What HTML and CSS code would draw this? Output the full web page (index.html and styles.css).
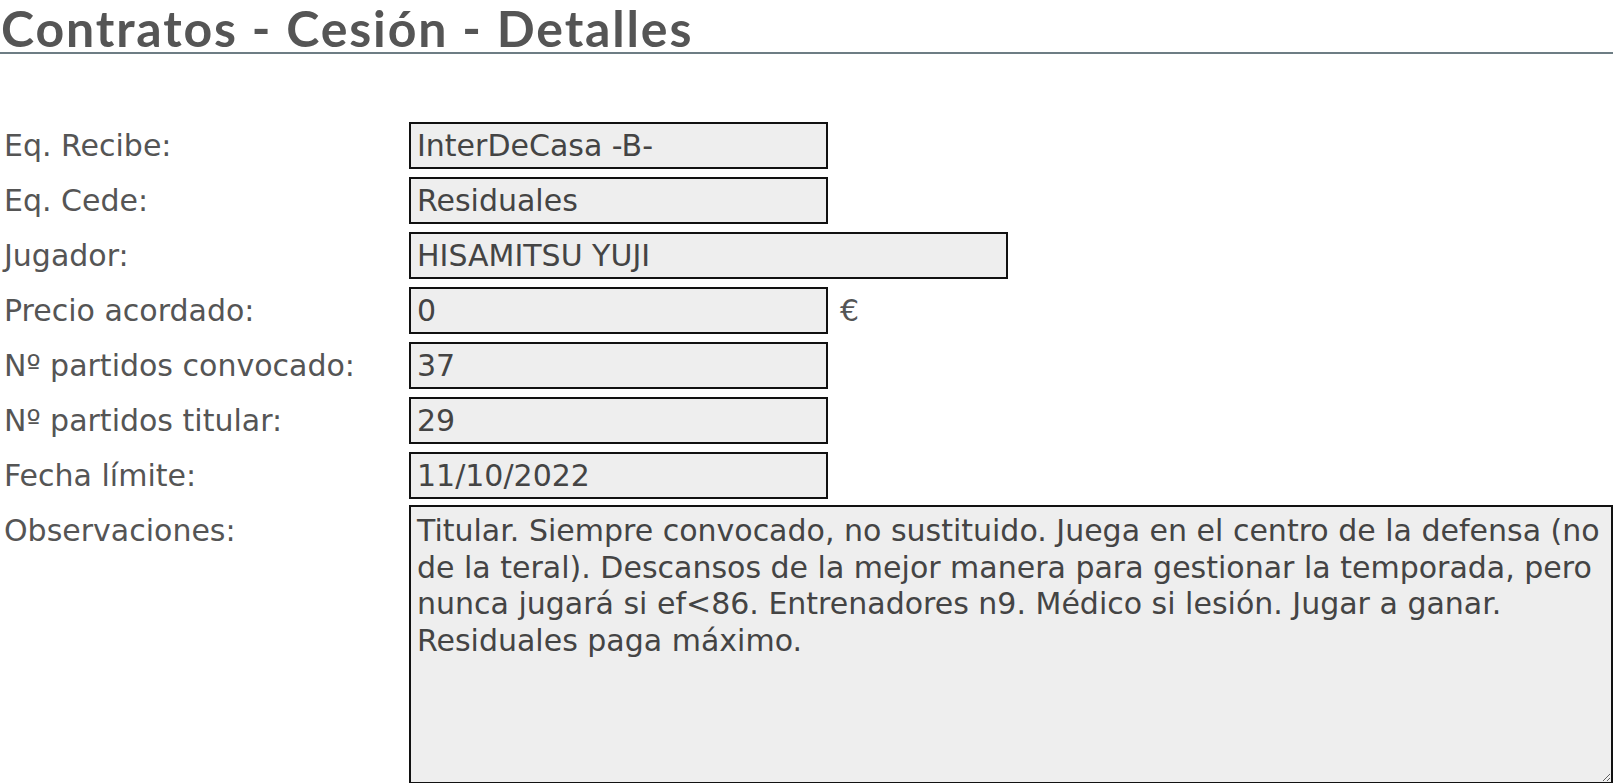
FILE: index.html
```html
<!DOCTYPE html>
<html lang="es">
<head>
<meta charset="utf-8">
<title>Contratos - Cesión - Detalles</title>
<link rel="stylesheet" href="styles.css">
</head>
<body>
<h1 class="page-title">Contratos - Cesión - Detalles</h1>
<form class="details">
  <label class="lbl" for="f1">Eq. Recibe:</label>
  <div class="field"><input id="f1" class="box" type="text" value="InterDeCasa -B-" readonly></div>

  <label class="lbl" for="f2">Eq. Cede:</label>
  <div class="field"><input id="f2" class="box" type="text" value="Residuales" readonly></div>

  <label class="lbl" for="f3">Jugador:</label>
  <div class="field"><input id="f3" class="box box-wide" type="text" value="HISAMITSU YUJI" readonly></div>

  <label class="lbl" for="f4">Precio acordado:</label>
  <div class="field"><input id="f4" class="box" type="text" value="0" readonly><span class="unit">€</span></div>

  <label class="lbl" for="f5">Nº partidos convocado:</label>
  <div class="field"><input id="f5" class="box" type="text" value="37" readonly></div>

  <label class="lbl" for="f6">Nº partidos titular:</label>
  <div class="field"><input id="f6" class="box" type="text" value="29" readonly></div>

  <label class="lbl" for="f7">Fecha límite:</label>
  <div class="field"><input id="f7" class="box" type="text" value="11/10/2022" readonly></div>

  <label class="lbl lbl-top" for="f8">Observaciones:</label>
  <div class="field field-top"><textarea id="f8" class="notes" readonly>Titular. Siempre convocado, no sustituido. Juega en el centro de la defensa (no de la teral). Descansos de la mejor manera para gestionar la temporada, pero nunca jugará si ef&lt;86. Entrenadores n9. Médico si lesión. Jugar a ganar. Residuales paga máximo.</textarea></div>
</form>
</body>
</html>
```
FILE: styles.css
```css
html, body {
  margin: 0;
  padding: 0;
  background: #ffffff;
  overflow: hidden;
}

body {
  font-family: "DejaVu Sans", Verdana, sans-serif;
  color: #555555;
}

.page-title {
  margin: 0;
  padding: 4px 0 0 1px;
  font-family: "Lato", "Liberation Sans", sans-serif;
  font-weight: 700;
  font-size: 50px;
  line-height: 48px;
  letter-spacing: 1.85px;
  color: #555555;
  border-bottom: 2px solid #6d7d84;
}

.details {
  display: grid;
  grid-template-columns: 405px 1fr;
  row-gap: 8px;
  padding: 68px 0 0 4px;
}

.lbl {
  font-size: 30px;
  line-height: 47px;
  white-space: nowrap;
}

.lbl-top {
  margin-top: -2px;
  line-height: 36.7px;
  padding-top: 8px;
}

.field {
  display: flex;
  align-items: center;
}

.field-top {
  margin-top: -2px;
}

.box {
  box-sizing: border-box;
  width: 419px;
  height: 47px;
  margin: 0;
  padding: 0 6px;
  border: 2px solid #111111;
  border-radius: 0;
  background: #eeeeee;
  font-family: "DejaVu Sans", Verdana, sans-serif;
  font-size: 30px;
  color: #444444;
  outline: none;
}

.box-wide {
  width: 599px;
}

.unit {
  margin-left: 12px;
  font-size: 30px;
  color: #555555;
}

.notes {
  box-sizing: border-box;
  width: calc(100% + 4px);
  height: 279px;
  margin: 0;
  padding: 6px 6px;
  border: 2px solid #111111;
  border-radius: 0;
  background: #eeeeee;
  font-family: "DejaVu Sans", Verdana, sans-serif;
  font-size: 30px;
  line-height: 36.7px;
  color: #444444;
  outline: none;
  overflow: hidden;
}
```
